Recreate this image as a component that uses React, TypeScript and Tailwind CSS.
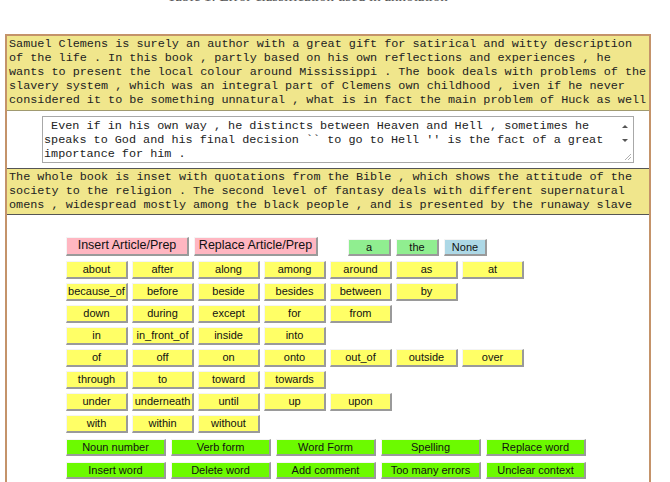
import React from "react";

const mono = { fontFamily: '"Liberation Mono", "Courier New", monospace' };
const sans = { fontFamily: '"Liberation Sans", Arial, sans-serif' };

const box1 = [
  "Samuel Clemens is surely an author with a great gift for satirical and witty description",
  "of the life . In this book , partly based on his own reflections and experiences , he",
  "wants to present the local colour around Mississippi . The book deals with problems of the",
  "slavery system , which was an integral part of Clemens own childhood , iven if he never",
  "considered it to be something unnatural , what is in fact the main problem of Huck as well",
];
const ta = [
  " Even if in his own way , he distincts between Heaven and Hell , sometimes he",
  "speaks to God and his final decision `` to go to Hell '' is the fact of a great",
  "importance for him .",
];
const box2 = [
  "The whole book is inset with quotations from the Bible , which shows the attitude of the",
  "society to the religion . The second level of fantasy deals with different supernatural",
  "omens , widespread mostly among the black people , and is presented by the runaway slave",
];

const rows = [
  ["about", "after", "along", "among", "around", "as", "at"],
  ["because_of", "before", "beside", "besides", "between", "by"],
  ["down", "during", "except", "for", "from"],
  ["in", "in_front_of", "inside", "into"],
  ["of", "off", "on", "onto", "out_of", "outside", "over"],
  ["through", "to", "toward", "towards"],
  ["under", "underneath", "until", "up", "upon"],
  ["with", "within", "without"],
];
const green1 = ["Noun number", "Verb form", "Word Form", "Spelling", "Replace word"];
const green2 = ["Insert word", "Delete word", "Add comment", "Too many errors", "Unclear context"];

const btn =
  "flex items-center justify-center whitespace-nowrap overflow-hidden border-t-[1px] border-l-[1px] border-b-[2px] border-r-[2px] border-t-[#f4f4f4] border-l-[#f4f4f4] border-b-[#9a9a9a] border-r-[#9a9a9a] text-[#111]";

export default function App() {
  return (
    <div className="w-[670px] h-[482px] overflow-hidden bg-white relative">
      <div
        className="mt-[-12px] h-[16px] w-[670px] text-center text-[15px] leading-[16px] text-[#555] pr-[55px]"
        style={{ fontFamily: '"Liberation Serif", "Times New Roman", serif' }}
      >
        Table 1: Error classification used in annotation
      </div>
      <div className="mt-[30px] ml-[5px] w-[646px] h-[460px] border-x-2 border-t-2 border-[#c4936a]">
        <div
          className="bg-[#f0e68c] pl-[2px] pt-[2px] pb-[2px] text-[11.8px] leading-[13.9px] text-[#222] border-b border-[#a09a70] overflow-hidden"
          style={mono}
        >
          {box1.map((l, i) => (
            <div key={i} className="whitespace-pre">{l}</div>
          ))}
        </div>
        <div className="pl-[35px] pt-[5px] pb-[5px]">
          <div className="w-[592px] h-[47px] border border-[#a8a8a8] flex bg-white">
            <div
              className="flex-1 pl-[1px] pt-[2px] text-[11.8px] leading-[14.3px] text-[#222] overflow-hidden"
              style={mono}
            >
              {ta.map((l, i) => (
                <div key={i} className="whitespace-pre">{l}</div>
              ))}
            </div>
            <div className="w-[16px] relative">
              <div className="absolute left-[5px] top-[8px] w-0 h-0 border-l-[3px] border-r-[3px] border-b-[3px] border-l-transparent border-r-transparent border-b-[#555]" />
              <div className="absolute left-[5px] top-[22px] w-0 h-0 border-l-[3px] border-r-[3px] border-t-[3px] border-l-transparent border-r-transparent border-t-[#555]" />
              <svg className="absolute right-[1px] bottom-[1px]" width="9" height="9" viewBox="0 0 9 9">
                <line x1="8" y1="2" x2="2" y2="8" stroke="#b0b0b0" strokeWidth="1" />
                <line x1="8" y1="5" x2="5" y2="8" stroke="#b0b0b0" strokeWidth="1" />
              </svg>
            </div>
          </div>
        </div>
        <div
          className="bg-[#f0e68c] pl-[2px] pt-[1px] pb-[1px] text-[11.8px] leading-[14.4px] text-[#222] border-y border-[#555] overflow-hidden"
          style={mono}
        >
          {box2.map((l, i) => (
            <div key={i} className="whitespace-pre">{l}</div>
          ))}
        </div>
        <div className="pl-[59px] pt-[22px] flex flex-col" style={sans}>
          <div className="flex h-[19px] items-start">
            <div className={`${btn} w-[123px] h-[19px] bg-[#ffb6c1] text-[12.5px]`}>Insert Article/Prep</div>
            <div className={`${btn} ml-[5px] w-[124px] h-[19px] bg-[#ffb6c1] text-[12.5px]`}>Replace Article/Prep</div>
            <div className={`${btn} ml-[30px] mt-[2px] w-[43px] h-[17px] bg-[#90ee90] text-[11px]`}>a</div>
            <div className={`${btn} ml-[5px] mt-[2px] w-[43px] h-[17px] bg-[#90ee90] text-[11px]`}>the</div>
            <div className={`${btn} ml-[5px] mt-[2px] w-[43px] h-[17px] bg-[#add8e6] text-[11px]`}>None</div>
          </div>
          <div className="mt-[5px] flex flex-col gap-[4px]">
            {rows.map((r, i) => (
              <div key={i} className="flex gap-[4px] h-[18px]">
                {r.map((w) => (
                  <div key={w} className={`${btn} w-[62px] h-[18px] bg-[#ffff66] text-[11px]`}>
                    {w}
                  </div>
                ))}
              </div>
            ))}
          </div>
          <div className="mt-[6px] flex flex-col gap-[6px]">
            {[green1, green2].map((r, i) => (
              <div key={i} className="flex gap-[5px] h-[17px]">
                {r.map((w) => (
                  <div key={w} className={`${btn} w-[100px] h-[17px] bg-[#6cfa00] text-[11px]`}>
                    {w}
                  </div>
                ))}
              </div>
            ))}
          </div>
        </div>
      </div>
    </div>
  );
}
